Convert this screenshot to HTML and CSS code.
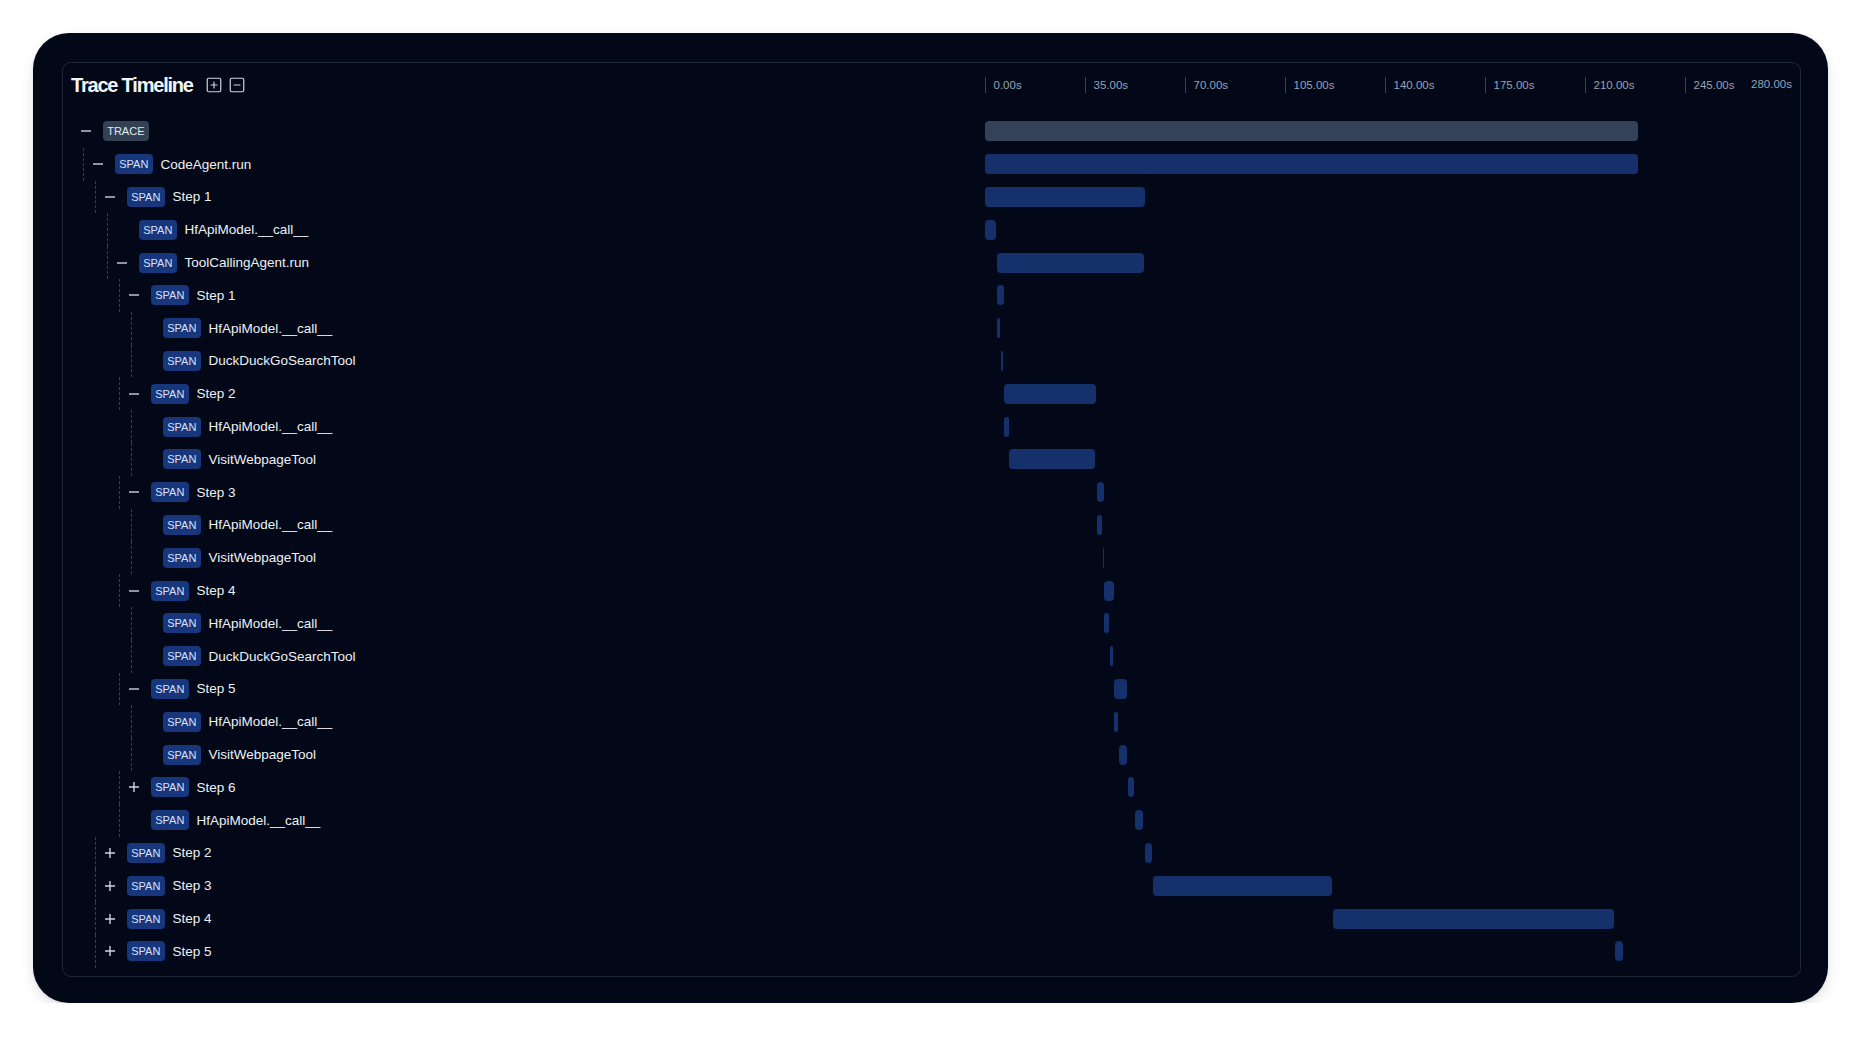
FILE: index.html
```html
<!DOCTYPE html>
<html lang="en">
<head>
<meta charset="utf-8">
<title>Trace Timeline</title>
<link rel="stylesheet" href="styles.css">
</head>
<body>
<div class="card">
  <section class="panel">
    <div class="head">
      <div class="title-wrap">
        <h2 class="title">Trace Timeline</h2>
        <button class="icon-btn" aria-label="Expand all">
          <svg viewBox="0 0 24 24" width="18" height="18" fill="none" stroke="currentColor" stroke-width="2" stroke-linecap="round" stroke-linejoin="round"><rect x="3" y="3" width="18" height="18" rx="2"/><path d="M8 12h8"/><path d="M12 8v8"/></svg>
        </button>
        <button class="icon-btn" aria-label="Collapse all">
          <svg viewBox="0 0 24 24" width="18" height="18" fill="none" stroke="currentColor" stroke-width="2" stroke-linecap="round" stroke-linejoin="round"><rect x="3" y="3" width="18" height="18" rx="2"/><path d="M8 12h8"/></svg>
        </button>
      </div>
      <div class="axis">
        <div class="tick"><span>0.00s</span></div>
        <div class="tick"><span>35.00s</span></div>
        <div class="tick"><span>70.00s</span></div>
        <div class="tick"><span>105.00s</span></div>
        <div class="tick"><span>140.00s</span></div>
        <div class="tick"><span>175.00s</span></div>
        <div class="tick"><span>210.00s</span></div>
        <div class="tick"><span>245.00s</span></div>
        <span class="axis-end">280.00s</span>
      </div>
    </div>

    <div class="rows">
      <div class="row">
        <div class="label d0">
          <span class="toggle"><svg viewBox="0 0 10 10"><path d="M0 5h10"/></svg></span>
          <span class="badge trace">TRACE</span>
        </div>
        <div class="track"><div class="bar grey" style="margin-left:0px;width:653px"></div></div>
      </div>

      <div class="row">
        <div class="label d1"><span class="indent"></span><span class="guide"></span>
          <span class="toggle"><svg viewBox="0 0 10 10"><path d="M0 5h10"/></svg></span>
          <span class="badge">SPAN</span><span class="name">CodeAgent.run</span>
        </div>
        <div class="track"><div class="bar" style="margin-left:0px;width:653px"></div></div>
      </div>

      <div class="row">
        <div class="label d2"><span class="indent"></span><span class="guide"></span>
          <span class="toggle"><svg viewBox="0 0 10 10"><path d="M0 5h10"/></svg></span>
          <span class="badge">SPAN</span><span class="name">Step 1</span>
        </div>
        <div class="track"><div class="bar" style="margin-left:0px;width:160px"></div></div>
      </div>

      <div class="row">
        <div class="label d3"><span class="indent"></span><span class="guide"></span>
          <span class="toggle"></span>
          <span class="badge">SPAN</span><span class="name">HfApiModel.__call__</span>
        </div>
        <div class="track"><div class="bar" style="margin-left:0px;width:11px"></div></div>
      </div>

      <div class="row">
        <div class="label d3"><span class="indent"></span><span class="guide"></span>
          <span class="toggle"><svg viewBox="0 0 10 10"><path d="M0 5h10"/></svg></span>
          <span class="badge">SPAN</span><span class="name">ToolCallingAgent.run</span>
        </div>
        <div class="track"><div class="bar" style="margin-left:12px;width:147px"></div></div>
      </div>

      <div class="row">
        <div class="label d4"><span class="indent"></span><span class="guide"></span>
          <span class="toggle"><svg viewBox="0 0 10 10"><path d="M0 5h10"/></svg></span>
          <span class="badge">SPAN</span><span class="name">Step 1</span>
        </div>
        <div class="track"><div class="bar" style="margin-left:12px;width:7px"></div></div>
      </div>

      <div class="row">
        <div class="label d5"><span class="indent"></span><span class="guide"></span>
          <span class="toggle"></span>
          <span class="badge">SPAN</span><span class="name">HfApiModel.__call__</span>
        </div>
        <div class="track"><div class="bar" style="margin-left:12px;width:3px"></div></div>
      </div>

      <div class="row">
        <div class="label d5"><span class="indent"></span><span class="guide"></span>
          <span class="toggle"></span>
          <span class="badge">SPAN</span><span class="name">DuckDuckGoSearchTool</span>
        </div>
        <div class="track"><div class="bar" style="margin-left:16px;width:2px"></div></div>
      </div>

      <div class="row">
        <div class="label d4"><span class="indent"></span><span class="guide"></span>
          <span class="toggle"><svg viewBox="0 0 10 10"><path d="M0 5h10"/></svg></span>
          <span class="badge">SPAN</span><span class="name">Step 2</span>
        </div>
        <div class="track"><div class="bar" style="margin-left:19px;width:92px"></div></div>
      </div>

      <div class="row">
        <div class="label d5"><span class="indent"></span><span class="guide"></span>
          <span class="toggle"></span>
          <span class="badge">SPAN</span><span class="name">HfApiModel.__call__</span>
        </div>
        <div class="track"><div class="bar" style="margin-left:19px;width:5px"></div></div>
      </div>

      <div class="row">
        <div class="label d5"><span class="indent"></span><span class="guide"></span>
          <span class="toggle"></span>
          <span class="badge">SPAN</span><span class="name">VisitWebpageTool</span>
        </div>
        <div class="track"><div class="bar" style="margin-left:24px;width:86px"></div></div>
      </div>

      <div class="row">
        <div class="label d4"><span class="indent"></span><span class="guide"></span>
          <span class="toggle"><svg viewBox="0 0 10 10"><path d="M0 5h10"/></svg></span>
          <span class="badge">SPAN</span><span class="name">Step 3</span>
        </div>
        <div class="track"><div class="bar" style="margin-left:112px;width:7px"></div></div>
      </div>

      <div class="row">
        <div class="label d5"><span class="indent"></span><span class="guide"></span>
          <span class="toggle"></span>
          <span class="badge">SPAN</span><span class="name">HfApiModel.__call__</span>
        </div>
        <div class="track"><div class="bar" style="margin-left:112px;width:5px"></div></div>
      </div>

      <div class="row">
        <div class="label d5"><span class="indent"></span><span class="guide"></span>
          <span class="toggle"></span>
          <span class="badge">SPAN</span><span class="name">VisitWebpageTool</span>
        </div>
        <div class="track"><div class="bar" style="margin-left:118px;width:1px"></div></div>
      </div>

      <div class="row">
        <div class="label d4"><span class="indent"></span><span class="guide"></span>
          <span class="toggle"><svg viewBox="0 0 10 10"><path d="M0 5h10"/></svg></span>
          <span class="badge">SPAN</span><span class="name">Step 4</span>
        </div>
        <div class="track"><div class="bar" style="margin-left:119px;width:10px"></div></div>
      </div>

      <div class="row">
        <div class="label d5"><span class="indent"></span><span class="guide"></span>
          <span class="toggle"></span>
          <span class="badge">SPAN</span><span class="name">HfApiModel.__call__</span>
        </div>
        <div class="track"><div class="bar" style="margin-left:119px;width:5px"></div></div>
      </div>

      <div class="row">
        <div class="label d5"><span class="indent"></span><span class="guide"></span>
          <span class="toggle"></span>
          <span class="badge">SPAN</span><span class="name">DuckDuckGoSearchTool</span>
        </div>
        <div class="track"><div class="bar" style="margin-left:125px;width:3px"></div></div>
      </div>

      <div class="row">
        <div class="label d4"><span class="indent"></span><span class="guide"></span>
          <span class="toggle"><svg viewBox="0 0 10 10"><path d="M0 5h10"/></svg></span>
          <span class="badge">SPAN</span><span class="name">Step 5</span>
        </div>
        <div class="track"><div class="bar" style="margin-left:129px;width:13px"></div></div>
      </div>

      <div class="row">
        <div class="label d5"><span class="indent"></span><span class="guide"></span>
          <span class="toggle"></span>
          <span class="badge">SPAN</span><span class="name">HfApiModel.__call__</span>
        </div>
        <div class="track"><div class="bar" style="margin-left:129px;width:4px"></div></div>
      </div>

      <div class="row">
        <div class="label d5"><span class="indent"></span><span class="guide"></span>
          <span class="toggle"></span>
          <span class="badge">SPAN</span><span class="name">VisitWebpageTool</span>
        </div>
        <div class="track"><div class="bar" style="margin-left:134px;width:8px"></div></div>
      </div>

      <div class="row">
        <div class="label d4"><span class="indent"></span><span class="guide"></span>
          <span class="toggle"><svg viewBox="0 0 10 10"><path d="M0 5h10M5 0v10"/></svg></span>
          <span class="badge">SPAN</span><span class="name">Step 6</span>
        </div>
        <div class="track"><div class="bar" style="margin-left:143px;width:6px"></div></div>
      </div>

      <div class="row">
        <div class="label d4"><span class="indent"></span><span class="guide"></span>
          <span class="toggle"></span>
          <span class="badge">SPAN</span><span class="name">HfApiModel.__call__</span>
        </div>
        <div class="track"><div class="bar" style="margin-left:150px;width:8px"></div></div>
      </div>

      <div class="row">
        <div class="label d2"><span class="indent"></span><span class="guide"></span>
          <span class="toggle"><svg viewBox="0 0 10 10"><path d="M0 5h10M5 0v10"/></svg></span>
          <span class="badge">SPAN</span><span class="name">Step 2</span>
        </div>
        <div class="track"><div class="bar" style="margin-left:160px;width:7px"></div></div>
      </div>

      <div class="row">
        <div class="label d2"><span class="indent"></span><span class="guide"></span>
          <span class="toggle"><svg viewBox="0 0 10 10"><path d="M0 5h10M5 0v10"/></svg></span>
          <span class="badge">SPAN</span><span class="name">Step 3</span>
        </div>
        <div class="track"><div class="bar" style="margin-left:168px;width:179px"></div></div>
      </div>

      <div class="row">
        <div class="label d2"><span class="indent"></span><span class="guide"></span>
          <span class="toggle"><svg viewBox="0 0 10 10"><path d="M0 5h10M5 0v10"/></svg></span>
          <span class="badge">SPAN</span><span class="name">Step 4</span>
        </div>
        <div class="track"><div class="bar" style="margin-left:348px;width:281px"></div></div>
      </div>

      <div class="row">
        <div class="label d2"><span class="indent"></span><span class="guide"></span>
          <span class="toggle"><svg viewBox="0 0 10 10"><path d="M0 5h10M5 0v10"/></svg></span>
          <span class="badge">SPAN</span><span class="name">Step 5</span>
        </div>
        <div class="track"><div class="bar" style="margin-left:630px;width:8px"></div></div>
      </div>
    </div>
  </section>
</div>
</body>
</html>
```

FILE: styles.css
```css
* { box-sizing: border-box; }

html, body {
  margin: 0;
  padding: 0;
  background: #ffffff;
  font-family: "Liberation Sans", Arial, sans-serif;
}

.card {
  margin: 33px 33px 0 33px;
  width: 1795px;
  background: #020817;
  border-radius: 36px;
  padding: 29px 27px 26px 29px;
  box-shadow: 0 6px 14px rgba(0, 0, 0, 0.10), 0 1px 3px rgba(0, 0, 0, 0.08);
}

.panel {
  border: 1px solid #1e293b;
  border-radius: 9px;
  padding: 0 15px 8px 0;
  background: #020817;
}

.head,
.row {
  display: grid;
  grid-template-columns: 1fr 800px;
}

.head {
  height: 44px;
  align-items: center;
}

.title-wrap {
  display: flex;
  align-items: center;
  padding-left: 8px;
}

.title {
  margin: 0;
  font-size: 20px;
  font-weight: 700;
  letter-spacing: -1.2px;
  color: #f1f5f9;
  line-height: 24px;
}

.icon-btn {
  border: 0;
  background: transparent;
  padding: 0;
  width: 18px;
  height: 18px;
  color: #cbd5e1;
  display: flex;
  align-items: center;
  justify-content: center;
  flex: none;
}

.icon-btn:first-of-type { margin-left: 12px; }
.icon-btn + .icon-btn { margin-left: 5px; }

.icon-btn svg { stroke-width: 1.6; }

.axis {
  position: relative;
  display: flex;
  align-items: center;
  height: 16px;
}

.tick {
  width: 100px;
  height: 16px;
  border-left: 1px solid #334155;
  display: flex;
  align-items: center;
  padding-left: 7.5px;
  flex: none;
}

.tick span,
.axis-end {
  font-size: 11.5px;
  color: #94a3b8;
  line-height: 14px;
  white-space: nowrap;
}

.axis-end {
  position: absolute;
  right: -7px;
  top: 0;
}

.rows {
  margin-top: 8px;
}

.row {
  height: 32.8px;
}

.label {
  display: flex;
  align-items: center;
  padding-left: 18px;
  height: 100%;
  min-width: 0;
}

.indent { flex: none; height: 1px; }
.d1 .indent { width: 1.5px; }
.d2 .indent { width: 13.5px; }
.d3 .indent { width: 25.5px; }
.d4 .indent { width: 37.5px; }
.d5 .indent { width: 49.5px; }

.guide {
  flex: none;
  width: 10.5px;
  align-self: stretch;
  border-left: 1px dashed #334155;
}

.toggle {
  flex: none;
  width: 10px;
  height: 10px;
  margin-right: 12px;
  display: flex;
}

.toggle svg {
  width: 10px;
  height: 10px;
  fill: none;
  stroke: #cbd5e1;
  stroke-width: 1.4;
}

.badge {
  flex: none;
  font-size: 11px;
  line-height: 20px;
  height: 20px;
  padding: 0 4.2px;
  border-radius: 4px;
  background: #17367c;
  color: #d6e0fb;
}

.badge.trace {
  background: #334155;
  color: #e2e8f0;
}

.name {
  margin-left: 8px;
  font-size: 13.5px;
  color: #edf1f6;
  white-space: nowrap;
}

.track {
  display: flex;
  align-items: center;
  height: 100%;
}

.bar {
  flex: none;
  height: 20px;
  border-radius: 4px;
  background: #14316c;
}

.bar.grey {
  background: #334259;
}
```
